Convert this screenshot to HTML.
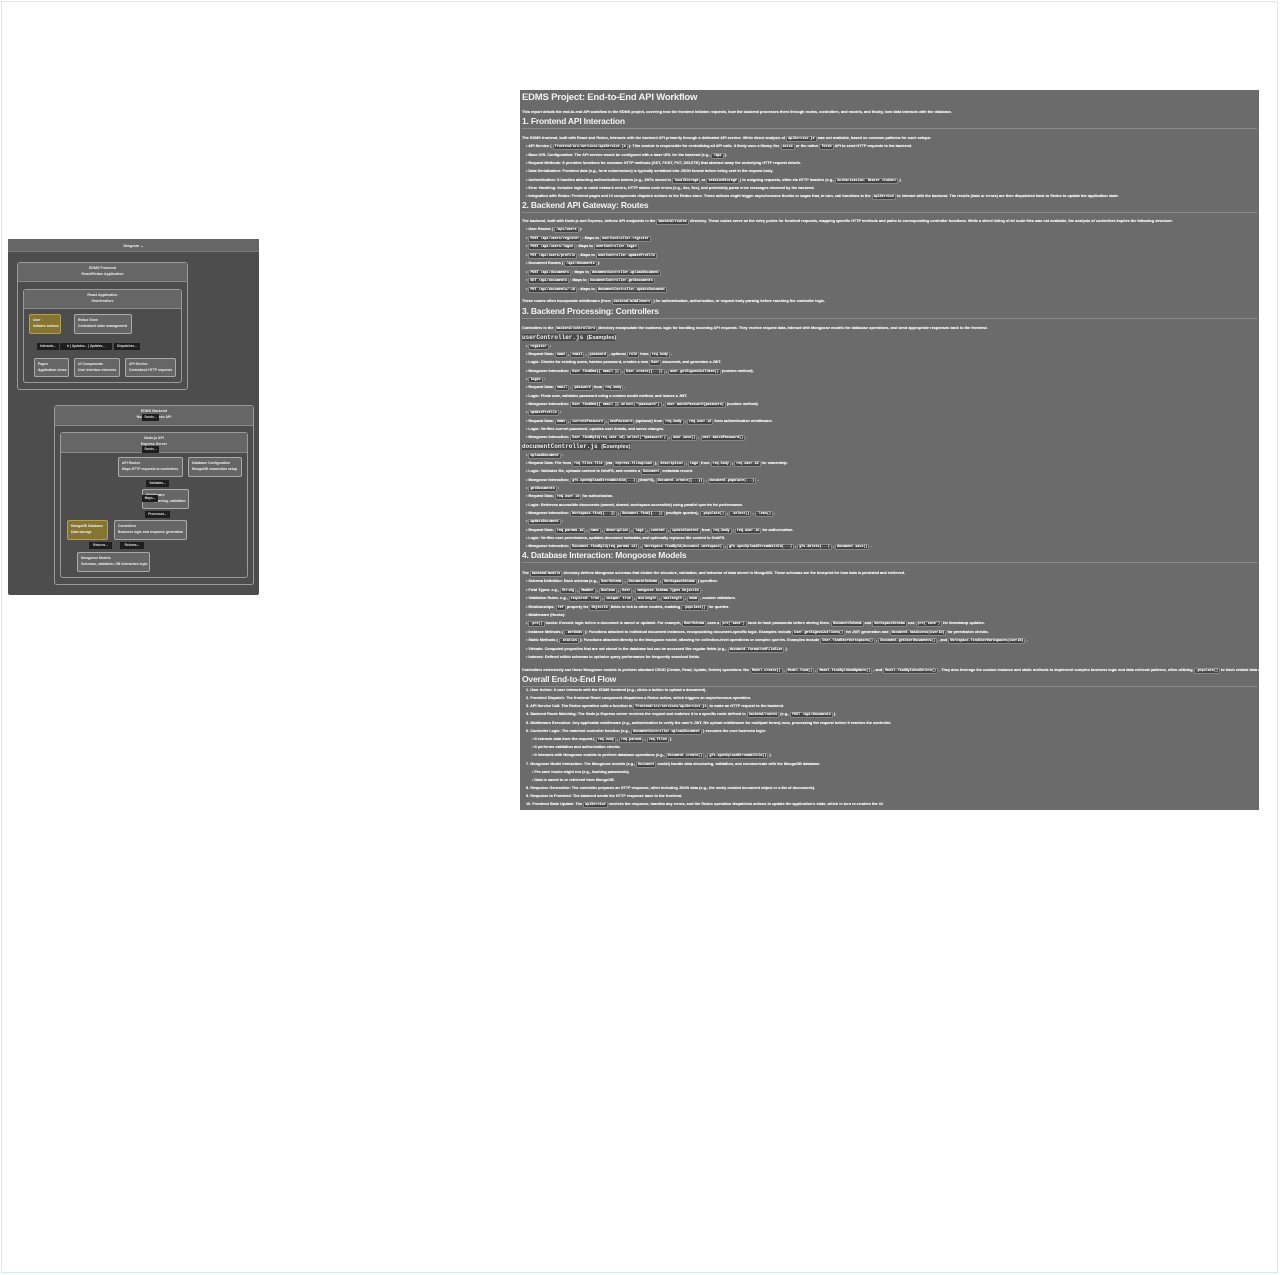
<!DOCTYPE html>
<html><head><meta charset="utf-8"><style>
*{margin:0;padding:0;box-sizing:border-box}
body{width:1280px;height:1275px;background:#fff;position:relative;overflow:hidden;font-family:"Liberation Sans",sans-serif}
.frame{position:absolute;left:1px;top:1px;width:1277px;height:1272px;border:1px solid #cfeee4}
.a{position:absolute}
#doc{position:absolute;left:520px;top:90px;width:739px;height:720px;background:#6b6b6b;overflow:hidden}
.l{position:absolute;left:2px;font-size:3.8px;line-height:5px;white-space:nowrap;color:#f0f0f0;font-weight:bold;text-shadow:0 0 0.4px #fff}
.b{left:6px}.bb{left:12px}
.l.b::before,.l.bb::before{content:"• ";}
.n1{left:6px}
.h{position:absolute;left:2px;font-size:8.5px;font-weight:bold;color:#f2f2f2;white-space:nowrap;letter-spacing:-0.2px}
.hr{position:absolute;left:2px;right:2px;height:1px;background:#8a8a8a}
code{background:#444;border:0.4px solid #888;border-radius:1px;padding:0 1px;font-family:"Liberation Mono",monospace;font-size:3.4px}
.cd{position:absolute;left:2px;font-family:"Liberation Mono",monospace;font-weight:bold;font-size:6px;color:#eee;background:#4a4a4a}
#dg{position:absolute;left:8px;top:239px;width:251px;height:356px;background:#4d4d4d;border-radius:2px}
.g{position:absolute;border:1px solid #9a9a9a;border-radius:3px;background:#4d4d4d}
.gh{position:absolute;left:0;right:0;top:0;background:#666;border-bottom:1px solid #888;text-align:center;color:#eee;font-size:3.6px;font-weight:bold;line-height:6px;padding-top:2px}
.n{position:absolute;border:1px solid #aaa;border-radius:2px;background:#666;color:#eee;font-size:3.4px;font-weight:bold;line-height:6px;padding:2px 0 0 3px;white-space:nowrap;overflow:hidden}
.y{background:#857530;border-color:#b0a050}
.t{position:absolute;background:#1e1e1e;color:#ddd;font-size:3.2px;font-weight:bold;line-height:6px;text-align:center;white-space:nowrap;overflow:hidden}
</style></head><body>
<div class="frame"></div>

<div id="dg">
 <div class="a" style="left:0;top:0;width:251px;height:13px;background:#666;border-bottom:1px solid #777;color:#eee;font-size:4px;font-weight:bold;text-align:center;line-height:13px">Diagram ⌄</div>
</div>
<div class="g" style="left:17px;top:262px;width:171px;height:128px"><div class="gh" style="height:19px">EDMS Frontend<br>React/Redux Application</div></div>
<div class="g" style="left:23px;top:289px;width:159px;height:94px"><div class="gh" style="height:19px">React Application<br>/frontend/src</div></div>
<div class="n y" style="left:29px;top:314px;width:32px;height:20px">User<br>Initiates actions</div>
<div class="n" style="left:74px;top:314px;width:58px;height:20px">Redux Store<br>Centralized state management</div>
<div class="t" style="left:37px;top:343px;width:22px;height:7px">Interacts...</div>
<div class="t" style="left:60px;top:343px;width:52px;height:7px">Ir | Updates... | Updates...</div>
<div class="t" style="left:114px;top:343px;width:26px;height:7px">Dispatches...</div>
<div class="n" style="left:34px;top:358px;width:35px;height:19px">Pages<br>Application views</div>
<div class="n" style="left:74px;top:358px;width:46px;height:19px">UI Components<br>User interface elements</div>
<div class="n" style="left:125px;top:358px;width:51px;height:19px">API Service<br>Centralized HTTP requests</div>

<div class="g" style="left:54px;top:405px;width:200px;height:180px"><div class="gh" style="height:20px">EDMS Backend<br>Node.js/Express API</div></div>
<div class="g" style="left:60px;top:432px;width:188px;height:146px"><div class="gh" style="height:20px">Node.js API<br>Express Server</div></div>
<div class="t" style="left:142px;top:414px;width:17px;height:7px">Sends...</div>
<div class="t" style="left:142px;top:446px;width:17px;height:7px">Sends...</div>
<div class="n" style="left:118px;top:457px;width:65px;height:20px">API Routes<br>Maps HTTP requests to controllers</div>
<div class="n" style="left:188px;top:457px;width:54px;height:20px">Database Configuration<br>MongoDB connection setup</div>
<div class="t" style="left:146px;top:480px;width:23px;height:7px">Validates...</div>
<div class="n" style="left:142px;top:489px;width:47px;height:20px">Middleware<br>Auth, parsing, validation</div>
<div class="t" style="left:142px;top:495px;width:16px;height:7px">Maps...</div>
<div class="t" style="left:145px;top:511px;width:25px;height:7px">Processes...</div>
<div class="n y" style="left:67px;top:520px;width:41px;height:20px">MongoDB Database<br>Data storage</div>
<div class="n" style="left:114px;top:520px;width:73px;height:20px">Controllers<br>Business logic and response generation</div>
<div class="t" style="left:89px;top:542px;width:23px;height:7px">Returns...</div>
<div class="t" style="left:120px;top:542px;width:24px;height:7px">Returns...</div>
<div class="n" style="left:77px;top:552px;width:73px;height:20px">Mongoose Models<br>Schemas, validation, DB interaction logic</div>

<div id="doc">
<div class="h" style="top:2px;font-size:9.5px">EDMS Project: End-to-End API Workflow</div>
<div class="l" style="top:20px">This report details the end-to-end API workflow in the EDMS project, covering how the frontend initiates requests, how the backend processes them through routes, controllers, and models, and finally, how data interacts with the database.</div>
<div class="h" style="top:26px">1. Frontend API Interaction</div><div class="hr" style="top:38px"></div>
<div class="l" style="top:46px">The EDMS frontend, built with React and Redux, interacts with the backend API primarily through a dedicated API service. While direct analysis of <code>apiService.js</code> was not available, based on common patterns for such setups:</div>
<div class="l b" style="top:54px">API Service ( <code>frontend/src/services/apiService.js</code> ): This module is responsible for centralizing all API calls. It likely uses a library like <code>axios</code> or the native <code>fetch</code> API to send HTTP requests to the backend.</div>
<div class="l b" style="top:63px">Base URL Configuration: The API service would be configured with a base URL for the backend (e.g., <code>/api</code> ).</div>
<div class="l b" style="top:71px">Request Methods: It provides functions for common HTTP methods (GET, POST, PUT, DELETE) that abstract away the underlying HTTP request details.</div>
<div class="l b" style="top:79px">Data Serialization: Frontend data (e.g., form submissions) is typically serialized into JSON format before being sent in the request body.</div>
<div class="l b" style="top:88px">Authentication: It handles attaching authentication tokens (e.g., JWTs stored in <code>localStorage</code> or <code>sessionStorage</code> ) to outgoing requests, often via HTTP headers (e.g., <code>Authorization: Bearer &lt;token&gt;</code> ).</div>
<div class="l b" style="top:96px">Error Handling: Includes logic to catch network errors, HTTP status code errors (e.g., 4xx, 5xx), and potentially parse error messages returned by the backend.</div>
<div class="l b" style="top:104px">Integration with Redux: Frontend pages and UI components dispatch actions to the Redux store. These actions might trigger asynchronous thunks or sagas that, in turn, call functions in the <code>apiService</code> to interact with the backend. The results (data or errors) are then dispatched back to Redux to update the application state.</div>
<div class="h" style="top:110px">2. Backend API Gateway: Routes</div><div class="hr" style="top:122px"></div>
<div class="l" style="top:129px">The backend, built with Node.js and Express, defines API endpoints in the <code>backend/routes</code> directory. These routes serve as the entry points for frontend requests, mapping specific HTTP methods and paths to corresponding controller functions. While a direct listing of all route files was not available, the analysis of controllers implies the following structure:</div>
<div class="l b" style="top:137px">User Routes ( <code>/api/users</code> ):</div>
<div class="l b" style="top:146px"><code>POST /api/users/register</code> : Maps to <code>userController.register</code></div>
<div class="l b" style="top:154px"><code>POST /api/users/login</code> : Maps to <code>userController.login</code></div>
<div class="l b" style="top:163px"><code>PUT /api/users/profile</code> : Maps to <code>userController.updateProfile</code></div>
<div class="l b" style="top:171px">Document Routes ( <code>/api/documents</code> ):</div>
<div class="l b" style="top:180px"><code>POST /api/documents</code> : Maps to <code>documentController.uploadDocument</code></div>
<div class="l b" style="top:188px"><code>GET /api/documents</code> : Maps to <code>documentController.getDocuments</code></div>
<div class="l b" style="top:197px"><code>PUT /api/documents/:id</code> : Maps to <code>documentController.updateDocument</code></div>
<div class="l" style="top:209px">These routes often incorporate middleware (from <code>backend/middleware</code> ) for authentication, authorization, or request body parsing before reaching the controller logic.</div>
<div class="h" style="top:216px">3. Backend Processing: Controllers</div><div class="hr" style="top:228px"></div>
<div class="l" style="top:236px">Controllers in the <code>backend/controllers</code> directory encapsulate the business logic for handling incoming API requests. They receive request data, interact with Mongoose models for database operations, and send appropriate responses back to the frontend.</div>
<div class="cd" style="top:244px">userController.js <span style="font-family:'Liberation Sans';font-size:5.5px">(Examples)</span></div>
<div class="l b" style="top:254px"><code>register</code> :</div>
<div class="l b" style="top:262px">Request Data: <code>name</code> , <code>email</code> , <code>password</code> , optional <code>role</code> from <code>req.body</code> .</div>
<div class="l b" style="top:270px">Logic: Checks for existing users, hashes password, creates a new <code>User</code> document, and generates a JWT.</div>
<div class="l b" style="top:279px">Mongoose Interaction: <code>User.findOne({ email })</code> , <code>User.create({...})</code> , <code>user.getSignedJwtToken()</code> (custom method).</div>
<div class="l b" style="top:287px"><code>login</code> :</div>
<div class="l b" style="top:295px">Request Data: <code>email</code> , <code>password</code> from <code>req.body</code> .</div>
<div class="l b" style="top:304px">Logic: Finds user, validates password using a custom model method, and issues a JWT.</div>
<div class="l b" style="top:312px">Mongoose Interaction: <code>User.findOne({ email }).select('+password')</code> , <code>user.matchPassword(password)</code> (custom method).</div>
<div class="l b" style="top:320px"><code>updateProfile</code> :</div>
<div class="l b" style="top:329px">Request Data: <code>name</code> , <code>currentPassword</code> , <code>newPassword</code> (optional) from <code>req.body</code> ; <code>req.user.id</code> from authentication middleware.</div>
<div class="l b" style="top:337px">Logic: Verifies current password, updates user details, and saves changes.</div>
<div class="l b" style="top:345px">Mongoose Interaction: <code>User.findById(req.user.id).select('+password')</code> , <code>user.save()</code> , <code>user.matchPassword()</code> .</div>
<div class="cd" style="top:353px">documentController.js <span style="font-family:'Liberation Sans';font-size:5.5px">(Examples)</span></div>
<div class="l b" style="top:363px"><code>uploadDocument</code> :</div>
<div class="l b" style="top:371px">Request Data: File from <code>req.files.file</code> (via <code>express-fileupload</code> ), <code>description</code> , <code>tags</code> from <code>req.body</code> ; <code>req.user.id</code> for ownership.</div>
<div class="l b" style="top:379px">Logic: Validates file, uploads content to GridFS, and creates a <code>Document</code> metadata record.</div>
<div class="l b" style="top:388px">Mongoose Interaction: <code>gfs.openUploadStreamWithId(...)</code> (GridFS), <code>Document.create({...})</code> , <code>document.populate(...)</code> .</div>
<div class="l b" style="top:396px"><code>getDocuments</code> :</div>
<div class="l b" style="top:404px">Request Data: <code>req.user.id</code> for authorization.</div>
<div class="l b" style="top:413px">Logic: Retrieves accessible documents (owned, shared, workspace-accessible) using parallel queries for performance.</div>
<div class="l b" style="top:421px">Mongoose Interaction: <code>Workspace.find({...})</code> , <code>Document.find({...})</code> (multiple queries), <code>.populate()</code> , <code>.select()</code> , <code>.lean()</code> .</div>
<div class="l b" style="top:429px"><code>updateDocument</code> :</div>
<div class="l b" style="top:438px">Request Data: <code>req.params.id</code> , <code>name</code> , <code>description</code> , <code>tags</code> , <code>content</code> , <code>updateContent</code> from <code>req.body</code> ; <code>req.user.id</code> for authorization.</div>
<div class="l b" style="top:446px">Logic: Verifies user permissions, updates document metadata, and optionally replaces file content in GridFS.</div>
<div class="l b" style="top:454px">Mongoose Interaction: <code>Document.findById(req.params.id)</code> , <code>Workspace.findById(document.workspace)</code> , <code>gfs.openUploadStreamWithId(...)</code> , <code>gfs.delete(...)</code> , <code>document.save()</code> .</div>
<div class="h" style="top:460px">4. Database Interaction: Mongoose Models</div><div class="hr" style="top:472px"></div>
<div class="l" style="top:481px">The <code>backend/models</code> directory defines Mongoose schemas that dictate the structure, validation, and behavior of data stored in MongoDB. These schemas are the blueprint for how data is persisted and retrieved.</div>
<div class="l b" style="top:489px">Schema Definition: Each schema (e.g., <code>UserSchema</code> , <code>DocumentSchema</code> , <code>WorkspaceSchema</code> ) specifies:</div>
<div class="l b" style="top:498px">Field Types: e.g., <code>String</code> , <code>Number</code> , <code>Boolean</code> , <code>Date</code> , <code>mongoose.Schema.Types.ObjectId</code> .</div>
<div class="l b" style="top:506px">Validation Rules: e.g., <code>required: true</code> , <code>unique: true</code> , <code>minlength</code> , <code>maxlength</code> , <code>enum</code> , custom validators.</div>
<div class="l b" style="top:515px">Relationships: <code>ref</code> property for <code>ObjectId</code> fields to link to other models, enabling <code>.populate()</code> for queries.</div>
<div class="l b" style="top:523px">Middleware (Hooks):</div>
<div class="l b" style="top:531px"><code>.pre()</code> hooks: Execute logic before a document is saved or updated. For example, <code>UserSchema</code> uses a <code>pre('save')</code> hook to hash passwords before storing them. <code>DocumentSchema</code> and <code>WorkspaceSchema</code> use <code>pre('save')</code> for timestamp updates.</div>
<div class="l b" style="top:540px">Instance Methods ( <code>.methods</code> ): Functions attached to individual document instances, encapsulating document-specific logic. Examples include <code>user.getSignedJwtToken()</code> for JWT generation and <code>document.hasAccess(userId)</code> for permission checks.</div>
<div class="l b" style="top:548px">Static Methods ( <code>.statics</code> ): Functions attached directly to the Mongoose model, allowing for collection-level operations or complex queries. Examples include <code>User.findUserWorkspaces()</code> , <code>Document.getUserDocuments()</code> , and <code>Workspace.findUserWorkspaces(userId)</code> .</div>
<div class="l b" style="top:557px">Virtuals: Computed properties that are not stored in the database but can be accessed like regular fields (e.g., <code>document.formattedFileSize</code> ).</div>
<div class="l b" style="top:565px">Indexes: Defined within schemas to optimize query performance for frequently searched fields.</div>
<div class="l" style="top:578px">Controllers extensively use these Mongoose models to perform standard CRUD (Create, Read, Update, Delete) operations like <code>Model.create()</code> , <code>Model.find()</code> , <code>Model.findByIdAndUpdate()</code> , and <code>Model.findByIdAndDelete()</code> . They also leverage the custom instance and static methods to implement complex business logic and data retrieval patterns, often utilizing <code>.populate()</code> to fetch related data across collections.</div>
<div class="h" style="top:584px">Overall End-to-End Flow</div><div class="hr" style="top:596px"></div>
<div class="l n1" style="top:598px">1. User Action: A user interacts with the EDMS frontend (e.g., clicks a button to upload a document).</div>
<div class="l n1" style="top:606px">2. Frontend Dispatch: The frontend React component dispatches a Redux action, which triggers an asynchronous operation.</div>
<div class="l n1" style="top:614px">3. API Service Call: The Redux operation calls a function in <code>frontend/src/services/apiService.js</code> to make an HTTP request to the backend.</div>
<div class="l n1" style="top:622px">4. Backend Route Matching: The Node.js Express server receives the request and matches it to a specific route defined in <code>backend/routes</code> (e.g., <code>POST /api/documents</code> ).</div>
<div class="l n1" style="top:631px">5. Middleware Execution: Any applicable middleware (e.g., authentication to verify the user's JWT, file upload middleware for multipart forms) runs, processing the request before it reaches the controller.</div>
<div class="l n1" style="top:639px">6. Controller Logic: The matched controller function (e.g., <code>documentController.uploadDocument</code> ) executes the core business logic:</div>
<div class="l bb" style="top:647px">It extracts data from the request ( <code>req.body</code> , <code>req.params</code> , <code>req.files</code> ).</div>
<div class="l bb" style="top:655px">It performs validation and authorization checks.</div>
<div class="l bb" style="top:663px">It interacts with Mongoose models to perform database operations (e.g., <code>Document.create()</code> , <code>gfs.openUploadStreamWithId()</code> ).</div>
<div class="l n1" style="top:672px">7. Mongoose Model Interaction: The Mongoose models (e.g., <code>Document</code> model) handle data structuring, validation, and communicate with the MongoDB database.</div>
<div class="l bb" style="top:680px">Pre-save hooks might run (e.g., hashing passwords).</div>
<div class="l bb" style="top:688px">Data is saved to or retrieved from MongoDB.</div>
<div class="l n1" style="top:696px">8. Response Generation: The controller prepares an HTTP response, often including JSON data (e.g., the newly created document object or a list of documents).</div>
<div class="l n1" style="top:704px">9. Response to Frontend: The backend sends the HTTP response back to the frontend.</div>
<div class="l n1" style="top:712px">10. Frontend State Update: The <code>apiService</code> receives the response, handles any errors, and the Redux operation dispatches actions to update the application's state, which in turn re-renders the UI.</div>
</div>
</body></html>
